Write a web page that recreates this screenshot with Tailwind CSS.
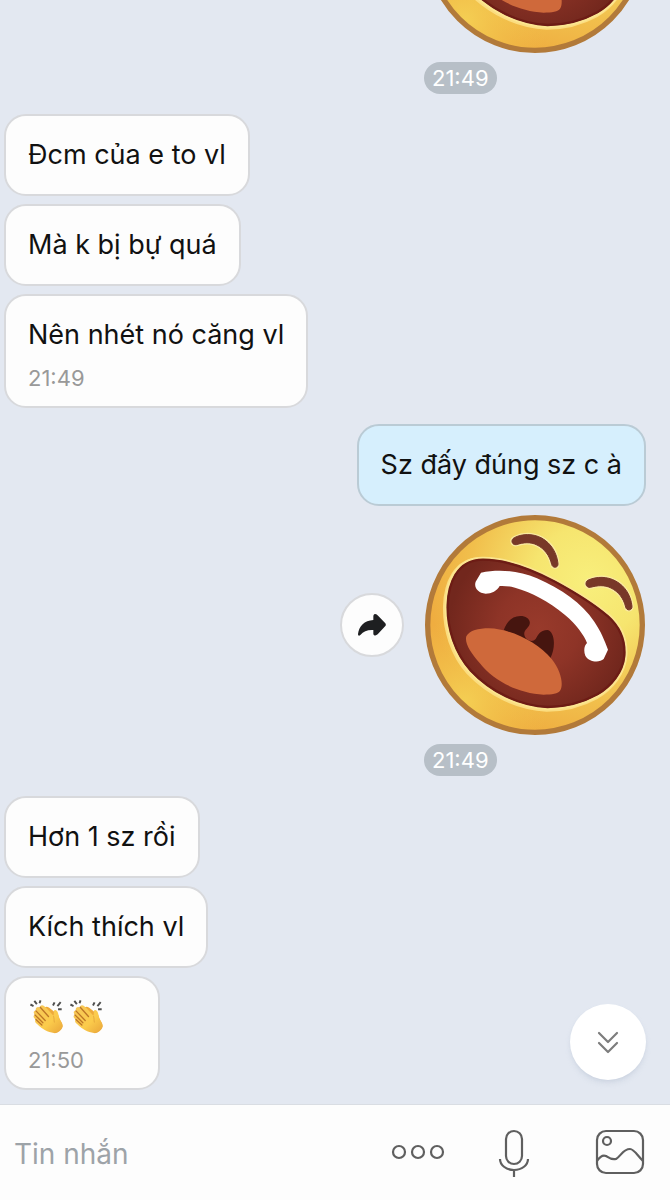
<!DOCTYPE html>
<html lang="vi">
<head>
<meta charset="utf-8">
<meta name="viewport" content="width=device-width, initial-scale=1">
<title>Tin nhắn</title>
<script src="https://cdn.jsdelivr.net/npm/@tailwindcss/browser@4"></script>
</head>
<body class="h-screen flex flex-col bg-[#e3e8f1] font-['Inter','Noto_Sans',sans-serif] text-[27px] leading-9 text-[#111111]">

<!-- Shared drawings -->
<svg class="absolute size-0" aria-hidden="true">
  <defs>
    <radialGradient id="skin" gradientUnits="userSpaceOnUse" cx="520" cy="230" r="480">
      <stop offset="0" stop-color="#f8ef7c"/>
      <stop offset=".35" stop-color="#f6e56f"/>
      <stop offset=".75" stop-color="#f1bf4c"/>
      <stop offset="1" stop-color="#efad40"/>
    </radialGradient>
    <radialGradient id="glow" gradientUnits="userSpaceOnUse" cx="150" cy="590" r="250">
      <stop offset="0" stop-color="#f5d255" stop-opacity=".9"/>
      <stop offset="1" stop-color="#f3c74c" stop-opacity="0"/>
    </radialGradient>
    <radialGradient id="mouth" gradientUnits="userSpaceOnUse" cx="370" cy="370" r="270">
      <stop offset="0" stop-color="#983a2b"/>
      <stop offset=".45" stop-color="#8e3427"/>
      <stop offset="1" stop-color="#72271d"/>
    </radialGradient>
    <linearGradient id="hand" x1="0" y1="0" x2="1" y2="1">
      <stop offset="0" stop-color="#f6c75a"/>
      <stop offset=".6" stop-color="#fbcb4b"/>
      <stop offset="1" stop-color="#e9a63a"/>
    </linearGradient>
    <path id="lips" d="M96 300C98 238 122 162 204 162C270 162 340 186 420 228C470 255 530 290 580 332C618 366 633 408 630 452C626 502 590 545 548 570C500 596 450 608 398 608C310 604 226 562 165 498C118 446 94 370 96 300Z"/>
    <path id="brows" d="M298 98C322 86 352 85 380 99C410 116 426 146 429 176C430 190 412 190 410 178C404 152 388 131 366 120C346 110 326 112 304 119C290 121 286 104 298 98ZM520 225C546 214 576 214 602 228C632 244 648 274 651 304C652 318 634 318 632 306C626 280 610 260 588 249C568 239 548 241 526 247C512 249 508 231 520 225Z"/>
  </defs>
  <symbol id="laugh" viewBox="30 30 660 660">
    <circle cx="360" cy="360" r="322" fill="url(#skin)"/>
    <circle cx="360" cy="360" r="322" fill="url(#glow)"/>
    <circle cx="360" cy="360" r="322" fill="none" stroke="#b27a3a" stroke-width="16"/>
    <use href="#lips" transform="translate(-3 3)" fill="#fbdd80" stroke="#fbdd80" stroke-width="18"/>
    <use href="#lips" fill="#fbdd80" stroke="#fbe690" stroke-width="14"/>
    <use href="#lips" fill="url(#mouth)"/>
    <path d="M98 300C100 239 124 164 204 164C270 164 340 188 420 230C470 257 530 292 579 334C616 367 631 408 628 452C624 501 589 543 547 568C500 594 450 606 398 606C311 602 227 560 167 496C120 444 96 370 98 300Z" fill="none" stroke="#6d1c15" stroke-width="7"/>
    <path d="M266 376C276 346 296 330 322 333C341 336 349 350 342 362C336 372 326 376 328 390C332 406 352 414 362 402C368 392 374 376 398 375C418 380 424 424 406 460C370 425 320 394 266 376Z" fill="#46150f"/>
    <path d="M154 394C164 376 190 370 222 370C290 372 368 412 410 462C438 498 446 536 436 556C430 567 410 569 386 569C312 564 240 532 194 474C168 444 148 414 154 394Z" fill="#cf693b"/>
    <path d="M198 203C250 192 310 196 366 220C440 252 500 294 538 350C558 380 568 404 579 434L566 462C552 475 520 470 511 452C505 436 508 422 516 414C508 392 484 358 450 330C400 288 350 262 300 248C284 244 268 242 254 243C246 258 230 266 212 266C188 264 176 246 182 230Z" fill="#fff"/>
    <use href="#brows" fill="#faeaa0" stroke="#faeaa0" stroke-width="10"/>
    <use href="#brows" fill="#783828" stroke="#783828" stroke-width="3"/>
  </symbol>
  <symbol id="clap" viewBox="88 86 104 106">
    <g fill="none" stroke="#50504f" stroke-width="6" stroke-linecap="square">
      <path d="M94 104l4 2M105 94l4 5M121 93l-1 3M163 99l-2 4M181 98l-6 7M183 117l-5 0"/>
    </g>
    <path d="M134 112C141 105 148 112 158 120C168 128 171 130 176 135C178 148 190 158 189 169C186 181 174 188 165 190L148 182Z" fill="#edaa3a"/>
    <path d="M121 107C128 101 134 108 141 115L161 137C164 130 160 119 166 119C177 121 176 137 180 149C184 155 189 160 188 169C185 179 174 187 163 188C143 187 128 177 113 163C105 157 103 151 108 148C99 142 99 136 105 134C98 127 102 121 108 122C105 111 113 107 121 112Z" fill="url(#hand)"/>
    <path d="M121 111L146 139M108 122L136 151M105 134L129 158M108 148L126 165" fill="none" stroke="#bd7627" stroke-width="4" stroke-linecap="round"/>
    <path d="M161 138C164 145 162 151 164 157" fill="none" stroke="#dc9935" stroke-width="2"/>
  </symbol>
</svg>

<main class="flex-1 min-h-0 overflow-hidden flex flex-col justify-end pl-1 pr-6 pb-[14px]">
  <section class="shrink-0 self-end w-[222px] flex flex-col items-start gap-2">
    <svg class="size-[222px] p-px" role="img" aria-label="Cười lớn"><use href="#laugh"/></svg>
    <time class="rounded-full bg-[#b7bfc7] px-2 h-8 leading-8 text-[22px] text-white">21:49</time>
  </section>

  <section class="shrink-0 mt-5 flex flex-col items-start gap-2">
    <p class="rounded-[22px] border-2 border-[#d8d9dc] bg-[#fdfdfd] px-[22px] py-[21px]">Đcm của e to vl</p>
    <p class="rounded-[22px] border-2 border-[#d8d9dc] bg-[#fdfdfd] px-[22px] py-[21px]">Mà k bị bự quá</p>
    <div class="rounded-[22px] border-2 border-[#d8d9dc] bg-[#fdfdfd] px-[22px] pt-[21px] pb-[11px]">
      <p>Nên nhét nó căng vl</p>
      <time class="block mt-2 text-[22px] leading-[34px] text-[#999999]">21:49</time>
    </div>
  </section>

  <section class="shrink-0 mt-4 flex flex-col items-end gap-2">
    <p class="rounded-[22px] border-2 border-[#bacbd5] bg-[#d6effd] px-[22px] py-[21px]">Sz đấy đúng sz c à</p>
    <div class="flex items-center gap-5">
      <button type="button" aria-label="Chuyển tiếp" class="size-16 rounded-full border-2 border-[#d8d9dc] bg-[#fdfdfd] grid place-items-center">
        <svg class="w-7 h-[22px]" viewBox="84 101 84 66"><path d="M133 102C137 100 141 103 145 107L166 129C168 132 168 134 166 137L143 162C137 168 130 165 130 160V149C112 148 101 153 91 164C87 168 84 166 84 161C87 137 103 121 130 119V108Q130 104 133 102Z" fill="#1e1f21"/></svg>
      </button>
      <svg class="size-[222px] p-px" role="img" aria-label="Cười lớn"><use href="#laugh"/></svg>
    </div>
    <div class="w-[222px] flex"><time class="rounded-full bg-[#b7bfc7] px-2 h-8 leading-8 text-[22px] text-white">21:49</time></div>
  </section>

  <section class="shrink-0 mt-5 flex flex-col items-start gap-2">
    <p class="rounded-[22px] border-2 border-[#d8d9dc] bg-[#fdfdfd] px-[22px] py-[21px]">Hơn 1 sz rồi</p>
    <p class="rounded-[22px] border-2 border-[#d8d9dc] bg-[#fdfdfd] px-[22px] py-[21px]">Kích thích vl</p>
    <div class="min-w-[156px] rounded-[22px] border-2 border-[#d8d9dc] bg-[#fdfdfd] px-[22px] pt-[21px] pb-[11px]">
      <div class="h-9 flex items-start gap-[5px] pl-px">
        <svg class="size-[35px]" role="img" aria-label="Vỗ tay"><use href="#clap"/></svg>
        <svg class="size-[35px]" role="img" aria-label="Vỗ tay"><use href="#clap"/></svg>
      </div>
      <time class="block mt-2 text-[22px] leading-[34px] text-[#999999]">21:50</time>
    </div>
  </section>
</main>

<footer class="relative shrink-0 h-24 flex items-center border-t border-[#d9dde3] bg-[#fdfdfd] pl-[14px] pr-[25px] pb-0.5 text-[#5f5f5f]">
  <button type="button" aria-label="Xuống tin mới nhất" class="absolute right-6 bottom-full mb-[25px] size-[76px] rounded-full bg-white shadow-md shadow-slate-400/20 grid place-items-center">
    <svg class="w-[22px] h-[23px]" viewBox="0 0 22 23" fill="none" stroke="#7d7d7d" stroke-width="2.2" stroke-linecap="round" stroke-linejoin="round"><path d="M2 2l9 9 9-9M2 12l9 9 9-9"/></svg>
  </button>
  <input type="text" aria-label="Tin nhắn" placeholder="Tin nhắn" class="flex-1 min-w-0 h-12 pt-1 text-[28px] bg-transparent outline-none placeholder:text-[#9da3a8]">
  <button type="button" aria-label="Thêm">
    <svg class="w-[54px] h-4" viewBox="0 0 54 16" fill="none" stroke="currentColor" stroke-width="2.2"><circle cx="8" cy="8" r="6"/><circle cx="27" cy="8" r="6"/><circle cx="46" cy="8" r="6"/></svg>
  </button>
  <button type="button" aria-label="Ghi âm" class="ml-[53px]">
    <svg class="w-8 h-[50px]" viewBox="0 0 32 50" fill="none" stroke="currentColor" stroke-width="2.2"><rect x="8" y="4" width="16" height="33" rx="8"/><path d="M2 32C2 38 8 43 16 43S30 38 30 32M16 43V50"/></svg>
  </button>
  <button type="button" aria-label="Gửi ảnh" class="ml-[65px]">
    <svg class="w-[50px] h-[46px]" viewBox="0 0 50 46" fill="none" stroke="currentColor" stroke-width="2.2"><rect x="2" y="2" width="46" height="42" rx="9"/><circle cx="12" cy="12" r="4"/><path d="M2 32C4 29 7 25 11 27C14 29 16 31 21 30C26 27 28 20 35 20C39 20 42 26 48 32"/></svg>
  </button>
</footer>
</body>
</html>
